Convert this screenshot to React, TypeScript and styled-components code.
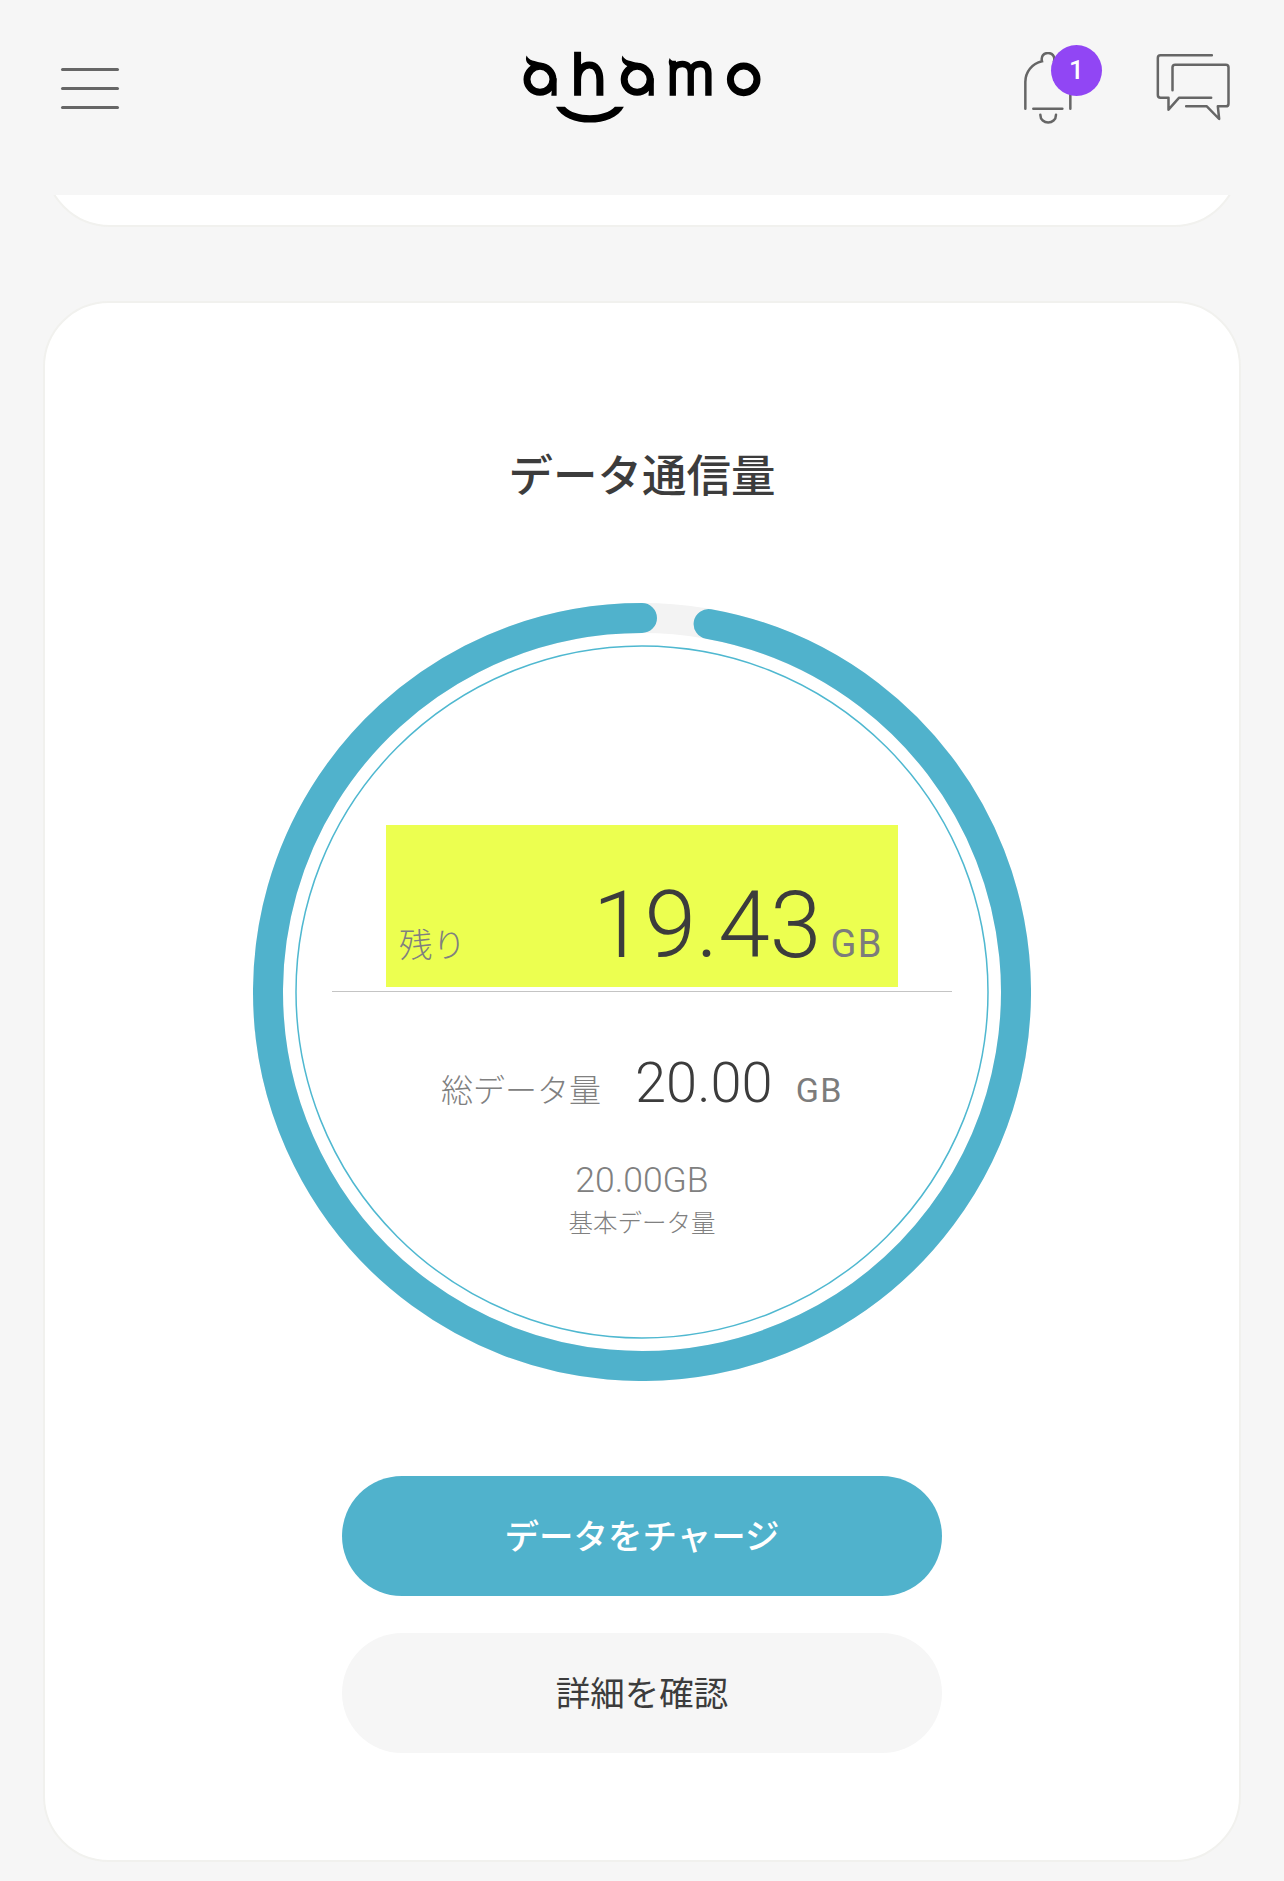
import * as React from 'react';
import styled, { createGlobalStyle } from 'styled-components';

const latin = `Roboto, "Noto Sans CJK JP", sans-serif`;
const cjk = `"Noto Sans CJK JP", sans-serif`;

const GlobalStyle = createGlobalStyle`
  html, body {
    margin: 0;
    padding: 0;
    background: #f6f6f6;
  }
  * {
    box-sizing: border-box;
  }
`;

const Page = styled.div`
  width: 1284px;
  height: 1881px;
  overflow: hidden;
  background: #f6f6f6;
  font-family: ${cjk};
  color: #3c3c3c;
`;

const Header = styled.header`
  position: sticky;
  top: 0;
  z-index: 2;
  height: 195px;
  padding: 0 52px 0 53px;
  display: grid;
  grid-template-columns: 1fr auto 1fr;
  align-items: flex-start;
  background: #f6f6f6;
`;

const MenuButton = styled.div`
  width: 58px;
  margin: 68px 0 0 8px;
  display: flex;
  flex-direction: column;
  gap: 16px;
  span {
    height: 3px;
    border-radius: 2px;
    background: #666666;
  }
`;

const LogoMark = styled.svg`
  display: block;
  width: 243px;
  height: 75px;
  margin: 50px 0 0 -2px;
`;

const HeaderIcons = styled.div`
  display: flex;
  justify-content: flex-end;
  align-items: flex-start;
  gap: 81px;
  padding: 52px 0 0 0;
`;

const BellWrap = styled.div`
  position: relative;
  width: 52px;
  height: 75px;
  svg {
    display: block;
  }
`;

const Badge = styled.span`
  position: absolute;
  left: 29px;
  top: -7px;
  width: 51px;
  height: 51px;
  border-radius: 50%;
  background: #9146f4;
  color: #ffffff;
  font-family: ${latin};
  font-size: 26px;
  font-weight: 500;
  line-height: 51px;
  text-align: center;
`;

const ChatIcon = styled.svg`
  display: block;
  width: 77px;
  height: 70px;
  margin-top: 1px;
`;

const Content = styled.main`
  padding: 0 43px;
`;

const StubCard = styled.div`
  height: 140px;
  margin: -108px 1px 0;
  background: #ffffff;
  border: 2px solid #f1f1ee;
  border-radius: 66px;
`;

const UsageCard = styled.section`
  margin-top: 74px;
  height: 1561px;
  padding: 140px 0 0;
  display: flex;
  flex-direction: column;
  align-items: center;
  background: #ffffff;
  border: 2px solid #f1f1ee;
  border-radius: 66px;
`;

const Title = styled.h2`
  margin: 0;
  font-size: 44.5px;
  font-weight: 500;
  line-height: 60px;
  color: #3c3c3c;
`;

const Ring = styled.div`
  position: relative;
  width: 778px;
  height: 778px;
  margin-top: 100px;
  padding-top: 222px;
  display: flex;
  flex-direction: column;
  align-items: center;
`;

const RingArt = styled.svg`
  position: absolute;
  left: 0;
  top: 0;
`;

const Remaining = styled.div`
  position: relative;
  width: 512px;
  height: 162px;
  padding: 0 15px 15px 13px;
  display: flex;
  align-items: baseline;
  justify-content: space-between;
  background: #ecff50;
  align-content: flex-end;
  flex-wrap: wrap;
`;

const RemainingLabel = styled.span`
  align-self: flex-end;
  margin-bottom: 9px;
  font-size: 33.5px;
  font-weight: 300;
  line-height: 40px;
  color: #808080;
`;

const Amount = styled.span`
  display: flex;
  align-items: baseline;
  gap: 9px;
`;

const BigNumber = styled.span<{ $size: number }>`
  font-family: ${latin};
  font-size: ${(p) => p.$size}px;
  font-weight: 300;
  line-height: 1;
  color: #3c3c3c;
`;

const Unit = styled.span<{ $size: number }>`
  font-family: ${latin};
  font-size: ${(p) => p.$size}px;
  font-weight: 400;
  line-height: 1;
  letter-spacing: 1.5px;
  color: #7c7c7c;
`;

const Rule = styled.div`
  position: relative;
  width: 620px;
  height: 1px;
  margin-top: 4px;
  background: #c4c4c4;
`;

const TotalRow = styled.div`
  position: relative;
  margin-top: 63px;
  display: flex;
  align-items: baseline;
  gap: 34px;
`;

const TotalLabel = styled.span`
  font-size: 32px;
  font-weight: 300;
  line-height: 56px;
  color: #808080;
`;

const TotalUnit = styled.span`
  margin-left: -11px;
`;

const BaseValue = styled.div`
  position: relative;
  margin-top: 44px;
  font-family: ${latin};
  font-size: 35.5px;
  font-weight: 300;
  line-height: 40px;
  color: #808080;
`;

const BaseLabel = styled.div`
  position: relative;
  margin-top: 4px;
  font-size: 24.5px;
  font-weight: 300;
  line-height: 36px;
  color: #808080;
`;

const ActionButton = styled.button<{ $primary?: boolean }>`
  display: block;
  width: 600px;
  height: 120px;
  padding: 0 0 4px;
  border: 0;
  border-radius: 60px;
  font-family: ${cjk};
  font-size: 34.5px;
  font-weight: ${(p) => (p.$primary ? 500 : 400)};
  color: ${(p) => (p.$primary ? '#ffffff' : '#3c3c3c')};
  background: ${(p) => (p.$primary ? '#50b2cc' : '#f6f6f6')};
  & + & {
    margin-top: 37px;
  }
`;

const Actions = styled.div`
  margin-top: 95px;
`;

const Logo = () => (
  <LogoMark viewBox="60 60 730 225" aria-label="ahamo">
    <g fill="none" stroke="#000" strokeWidth="21">
      <circle cx="120" cy="148" r="39" />
      <circle cx="412" cy="148" r="39" />
      <circle cx="732" cy="148" r="40" />
      <path d="M233 65V197M233 150C233 122 250 105 268 105C288 105 300 122 300 150V197" />
      <path d="M519 197V92M519 130C519 112 532 102 548 102C564 102 573 114 573 130V197M573 130C573 112 586 102 602 102C618 102 626 114 626 130V197" strokeWidth="19" />
    </g>
    <path d="M159 145H170V197H154Z" />
    <path d="M451 145H462V197H446Z" />
    <path d="M80 76C86 92 104 92 128 99L120 118C98 112 70 100 80 76Z" />
    <path d="M368 76C374 92 392 92 416 99L408 118C386 112 358 100 368 76Z" />
    <path d="M510 84C514 95 525 94 535 100L525 118C510 112 502 100 510 84Z" />
    <path d="M168 230H195C225 264 315 264 345 230H372C340 294 200 294 168 230Z" />
  </LogoMark>
);

const Bell = () => (
  <svg width="52" height="75" viewBox="240 100 156 225" fill="none" stroke="#666" strokeWidth="7.5" strokeLinecap="round">
    <path d="M250 270V190C250 160 270 135 300 128C296 112 306 103 318 103C330 103 340 112 336 128C366 135 385 160 385 190V270" />
    <path d="M274 270H361" />
    <path d="M295 288C295 319 342 319 342 288" />
  </svg>
);

const Chat = () => (
  <ChatIcon viewBox="640 98 230 210" fill="none" stroke="#666" strokeWidth="7.5" strokeLinecap="round" strokeLinejoin="round">
    <path d="M810 105H656Q648 105 648 113V224Q648 232 656 232H680V268L712 232H808" />
    <path d="M692 210V141Q692 133 700 133H852Q860 133 860 141V250Q860 258 852 258H828L832 296L795 258H733" />
  </ChatIcon>
);

const arcStart = (10.26 * Math.PI) / 180;
const arcX = 389 + 374 * Math.sin(arcStart);
const arcY = 389 - 374 * Math.cos(arcStart);

const UsageRing = () => (
  <RingArt width="778" height="778" viewBox="0 0 778 778" fill="none">
    <circle cx="389" cy="389" r="374" stroke="#f3f3f3" strokeWidth="30" />
    <path
      d={`M${arcX} ${arcY}A374 374 0 1 1 389 15`}
      stroke="#50b2cc"
      strokeWidth="30"
      strokeLinecap="round"
    />
    <circle cx="389" cy="389" r="346" stroke="#4fb8d0" strokeWidth="1.5" />
  </RingArt>
);

export default function App() {
  return (
    <Page>
      <GlobalStyle />
      <Header>
        <MenuButton>
          <span />
          <span />
          <span />
        </MenuButton>
        <Logo />
        <HeaderIcons>
          <BellWrap>
            <Bell />
            <Badge>1</Badge>
          </BellWrap>
          <Chat />
        </HeaderIcons>
      </Header>
      <Content>
        <StubCard />
        <UsageCard>
          <Title>データ通信量</Title>
          <Ring>
            <UsageRing />
            <Remaining>
              <RemainingLabel>残り</RemainingLabel>
              <Amount>
                <BigNumber $size={93}>19.43</BigNumber>
                <Unit $size={38}>GB</Unit>
              </Amount>
            </Remaining>
            <Rule />
            <TotalRow>
              <TotalLabel>総データ量</TotalLabel>
              <BigNumber $size={56}>20.00</BigNumber>
              <TotalUnit>
                <Unit $size={34}>GB</Unit>
              </TotalUnit>
            </TotalRow>
            <BaseValue>20.00GB</BaseValue>
            <BaseLabel>基本データ量</BaseLabel>
          </Ring>
          <Actions>
            <ActionButton $primary>データをチャージ</ActionButton>
            <ActionButton>詳細を確認</ActionButton>
          </Actions>
        </UsageCard>
      </Content>
    </Page>
  );
}
